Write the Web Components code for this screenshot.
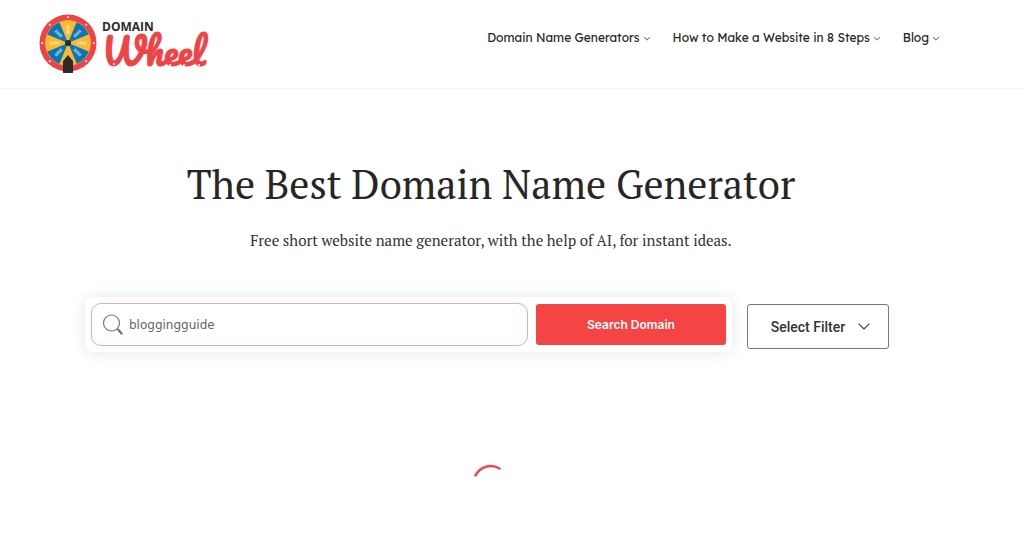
<!DOCTYPE html>
<html lang="en">
<head>
<meta charset="utf-8">
<title>Domain Wheel</title>
<style>
body { margin: 0; background: #fff; color: #272626; font-family: Inter, "Open Sans", sans-serif; }
</style>
</head>
<body>
<domain-page></domain-page>
<script>
const define = (name, html, setup) => customElements.define(name, class extends HTMLElement {
  constructor() {
    super();
    this.attachShadow({ mode: 'open' }).innerHTML = html;
    if (setup) setup(this);
  }
});

define('chevron-icon', `
<style>
:host { display: block; width: var(--size, 6px); line-height: 0; }
svg { width: 100%; height: auto; overflow: visible; }
path { stroke-width: var(--line, 2.4); }
</style>
<svg viewBox="0 0 14 8" aria-hidden="true"><path d="M1 1l6 6 6-6" fill="none" stroke="currentColor" stroke-linecap="round" stroke-linejoin="round"/></svg>`);

define('wheel-icon', `
<style>:host { display: block; width: 58px; height: 60px; } svg { display: block; width: 100%; height: 100%; }</style>
<svg viewBox="-29 -29 58 60" aria-hidden="true">
  <circle r="28.5" fill="#ef4347"/>
  <circle r="23" fill="#d9a94a"/>
  <g id="slices"></g>
  <circle r="3" fill="#2b2b2b"/>
  <path d="M-5 30V18L0 12l5 6v12z" fill="#2b2b2b"/>
</svg>`, el => {
  const g = el.shadowRoot.querySelector('#slices');
  const dx = 22.5 * Math.sin(Math.PI / 8), dy = 22.5 * Math.cos(Math.PI / 8);
  let s = '';
  for (let i = 0; i < 8; i++) {
    s += `<g transform="rotate(${i * 45})"><path d="M0 0L${-dx} ${-dy}A22.500 22.500 0 0 1 ${dx} ${-dy}z" fill="${i % 2 ? '#0a76b4' : '#fdb92e'}"/>`;
    if (i !== 4) s += '<path d="M0-9V-18" stroke="#fff" stroke-opacity=".55" stroke-width="3" stroke-dasharray="1.800 .500"/>';
    s += '<circle cy="-25.700" r="1" fill="#fff"/></g>';
  }
  g.innerHTML = s;
});

define('site-logo', `
<style>
:host { display: block; }
a { display: flex; gap: 5px; color: #2b2b2b; text-decoration: none; }
.words { position: relative; display: flex; flex-direction: column; padding-top: 6px; }
.top { font: 700 12px/14px "Open Sans", sans-serif; }
.script { font: 400 36px/34px Pacifico, "Lily Script One", Lobster, cursive; color: #ef4347; -webkit-text-stroke: 1px #ef4347; }
.dots { position: absolute; left: 0; top: 0; width: 112px; height: 60px; fill: #fff; }
</style>
<a href="#"><wheel-icon></wheel-icon><span class="words"><span class="top">DOMAIN</span><span class="script">Wheel</span><svg class="dots" viewBox="0 0 112 60" aria-hidden="true"><circle cx="12" cy="50" r="1"/><circle cx="44" cy="50" r="1"/><circle cx="68" cy="51" r="1"/><circle cx="82" cy="51" r="1"/><circle cx="97" cy="51" r="1"/></svg></span></a>`);

define('nav-item', `
<style>
:host { display: block; }
a { display: flex; align-items: center; gap: 4px; color: #272626; text-decoration: none; font: 400 12px/20px Lexend, Inter, sans-serif; white-space: nowrap; }
chevron-icon { color: #777; }
</style>
<a href="#"><slot></slot><chevron-icon></chevron-icon></a>`);

define('site-header', `
<style>
:host { display: block; border-bottom: 1px solid #f8f8f8; }
header { display: flex; justify-content: space-between; align-items: flex-start; padding: 14px 85px 14px 39px; }
nav { display: flex; gap: 23px; padding-top: 14px; }
</style>
<header><site-logo></site-logo><nav aria-label="Main"><nav-item>Domain Name Generators</nav-item><nav-item>How to Make a Website in 8 Steps</nav-item><nav-item>Blog</nav-item></nav></header>`);

define('search-box', `
<style>
:host { display: block; }
form { display: grid; grid-template-columns: 23fr 10fr; gap: 8px; padding: 6px; border-radius: 8px; background: #fff; box-shadow: 0 0 16px rgba(0,0,0,.1); }
label { display: flex; align-items: center; gap: 6px; height: 41px; padding: 0 10px; border: 1px solid #eda9aa; border-radius: 10px; }
svg { flex: none; width: 21px; height: 21px; }
input { flex: 1; min-width: 0; border: 0; outline: 0; padding: 0; background: none; color: #666; font: 12px/20px "DejaVu Sans", sans-serif; }
button { margin: 1px 0; border: 0; border-radius: 3px; background: #f54444; color: #fff; font: 600 12px/20px Inter, sans-serif; }
</style>
<form>
<label><svg viewBox="0 0 21 21" fill="none" stroke="#777" aria-hidden="true"><circle cx="9.500" cy="9" r="8" stroke-width="1.200"/><path d="M15 14.500l1.500 1.500" stroke-width="1.200"/><path d="M16.500 16l3 3.500" stroke-width="2.400" stroke-linecap="round"/></svg><input type="text" aria-label="Keyword" value="bloggingguide"></label>
<button type="button">Search Domain</button>
</form>`);

define('filter-button', `
<style>
:host { display: block; }
button { display: flex; align-items: center; justify-content: center; gap: 13px; width: 100%; height: 45px; padding: 0 0 0 5px; border: 1px solid #777; border-radius: 3px; background: #fff; color: #333; font: 500 14px/20px Roboto, sans-serif; }
chevron-icon { --size: 12px; --line: 1.3; color: #444; }
</style>
<button type="button" aria-haspopup="true"><slot></slot><chevron-icon></chevron-icon></button>`);

define('loading-spinner', `
<style>:host { display: block; width: 34px; height: 34px; } svg { display: block; }</style>
<svg width="34" height="34" viewBox="0 0 34 34" role="img" aria-label="Loading"><path d="M1.500 11.500A17 17 0 0 1 25.500 4.500" fill="none" stroke="#f54444" stroke-width="2.500" stroke-linecap="round"/></svg>`);

define('domain-page', `
<style>
:host { display: block; }
main { display: flex; flex-direction: column; align-items: center; padding: 65px 42px 0 0; }
h1 { margin: 0; font: 400 40px/60px "PT Serif", "Liberation Serif", serif; color: #272626; text-align: center; }
p { margin: 14px 0 0; font: 400 15px/24px "PT Serif", "Liberation Serif", serif; color: #333; text-align: center; }
.row { align-self: stretch; display: grid; grid-template-columns: 1fr 142px; gap: 15px; align-items: start; margin: 45px 93px 0 85px; }
filter-button { margin-top: 7px; }
loading-spinner { margin-top: 112px; }
</style>
<site-header></site-header>
<main>
<h1>The Best Domain Name Generator</h1>
<p>Free short website name generator, with the help of AI, for instant ideas.</p>
<div class="row"><search-box></search-box><filter-button>Select Filter</filter-button></div>
<loading-spinner></loading-spinner>
</main>`);
</script>
</body>
</html>
